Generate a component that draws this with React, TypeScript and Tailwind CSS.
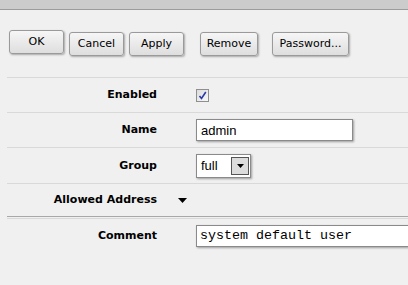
import { JSX } from "react";

const Button = ({ label, width }: { label: string; width: string }): JSX.Element => (
  <button
    className={`${width} h-[24px] rounded-[3px] border border-[#9a9a9a] bg-gradient-to-b from-[#f6f6f6] to-[#dedede] text-[11px] text-black shadow-[1px_1px_2px_rgba(0,0,0,0.3)]`}
  >
    {label}
  </button>
);

const Label = ({ text }: { text: string }): JSX.Element => (
  <div className="w-[150px] text-right text-[11px] font-bold text-black">{text}</div>
);

export default function App(): JSX.Element {
  return (
    <div
      className="w-[408px] h-[285px] overflow-hidden bg-[#f0f0f0]"
      style={{ fontFamily: '"DejaVu Sans", Verdana, sans-serif' }}
    >
      <div className="h-[10px] bg-[#cccccc] border-b border-[#9c9c9c]" />

      <div className="flex pl-[9px] pt-[20px]">
        <Button label="OK" width="w-[55px]" />
        <div className="ml-[5px]">
          <Button label="Cancel" width="w-[55px]" />
        </div>
        <div className="ml-[5px]">
          <Button label="Apply" width="w-[55px]" />
        </div>
        <div className="ml-[16px]">
          <Button label="Remove" width="w-[58px]" />
        </div>
        <div className="ml-[14px]">
          <Button label="Password..." width="w-[77px]" />
        </div>
      </div>

      <div className="ml-[7px] mt-[21px]">
        <div className="flex h-[35px] items-center border-t border-[#d9d9d9]">
          <Label text="Enabled" />
          <div className="ml-[39px] flex h-[13px] w-[13px] items-center justify-center border border-[#8f8f8f] bg-gradient-to-br from-[#dcdcdc] to-[#f8f8f8]">
            <svg width="9" height="9" viewBox="0 0 9 9">
              <path d="M1.5 5 L3.5 7.5 L7.8 1" fill="none" stroke="#2b3aa8" strokeWidth="1.6" />
            </svg>
          </div>
        </div>

        <div className="flex h-[35px] items-center border-t border-[#d9d9d9]">
          <Label text="Name" />
          <div
            className="ml-[39px] flex h-[22px] w-[157px] items-center border border-[#8a8a8a] bg-white pl-[4px] text-[13px] text-black shadow-[1px_1px_2px_rgba(0,0,0,0.35)]"
            style={{ fontFamily: '"Liberation Sans", Arial, sans-serif' }}
          >
            admin
          </div>
        </div>

        <div className="flex h-[36px] items-center border-t border-[#d9d9d9]">
          <Label text="Group" />
          <div
            className="ml-[39px] flex h-[24px] w-[55px] items-center justify-between border border-[#8a8a8a] bg-white pl-[4px] pr-[1px] text-[13px] text-black shadow-[1px_1px_2px_rgba(0,0,0,0.35)]"
            style={{ fontFamily: '"Liberation Sans", Arial, sans-serif' }}
          >
            <span>full</span>
            <div className="flex h-[18px] w-[18px] items-center justify-center border border-[#555] bg-[#dcdcdc]">
              <svg width="7" height="4" viewBox="0 0 7 4">
                <path d="M0 0 H7 L3.5 4 Z" fill="#000" />
              </svg>
            </div>
          </div>
        </div>

        <div className="flex h-[33px] items-center border-t border-[#d9d9d9]">
          <Label text="Allowed Address" />
          <svg className="ml-[21px]" width="9" height="5" viewBox="0 0 9 5">
            <path d="M0 0 H9 L4.5 5 Z" fill="#000" />
          </svg>
        </div>

        <div className="h-[3px] border-t border-[#a8a8a8] border-b border-b-[#d9d9d9]" />

        <div className="flex h-[34px] items-center">
          <Label text="Comment" />
          <div
            className="ml-[39px] flex h-[22px] flex-1 items-center border border-r-0 border-[#8a8a8a] bg-white pl-[3px] text-[13.33px] text-black shadow-[1px_1px_2px_rgba(0,0,0,0.35)]"
            style={{ fontFamily: '"Liberation Mono", "Courier New", monospace' }}
          >
            system default user
          </div>
        </div>
      </div>
    </div>
  );
}
